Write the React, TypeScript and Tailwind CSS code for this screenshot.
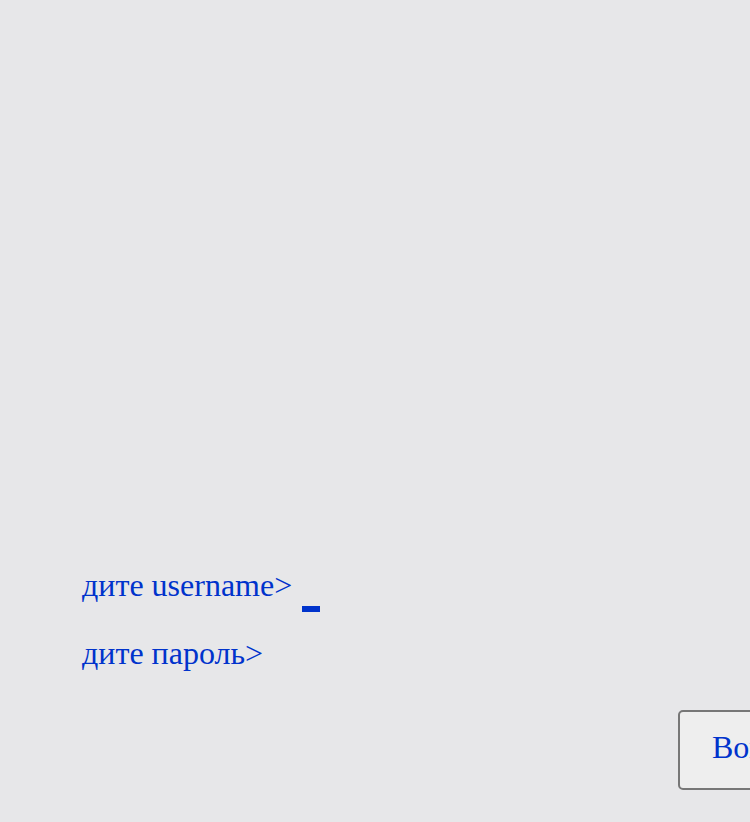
import React from "react";

export default function App() {
  return (
    <div
      className="relative h-[822px] w-[750px] overflow-hidden bg-[#e7e7e9] text-[#0033cc]"
      style={{ fontFamily: '"Liberation Serif", "Times New Roman", serif' }}
    >
      <div className="flex flex-col pl-[82px] pt-[563px]">
        <div className="flex h-[44px] items-center text-[32px] leading-[44px]">
          <span>дите username&gt;</span>
          <span className="ml-[10px] mt-[48px] inline-block h-[6px] w-[18px] bg-[#0033cc]" />
        </div>
        <div className="mt-[24px] h-[44px] text-[32px] leading-[44px]">дите пароль&gt;</div>
      </div>
      <div className="mt-[35px] flex pl-[678px]">
        <button className="h-[80px] w-[180px] shrink-0 rounded-[5px] border-2 border-[#777777] bg-[#eeeeee] pb-[6px] pl-[32px] text-left text-[32px] text-[#0033cc]">
          Войти
        </button>
      </div>
    </div>
  );
}
